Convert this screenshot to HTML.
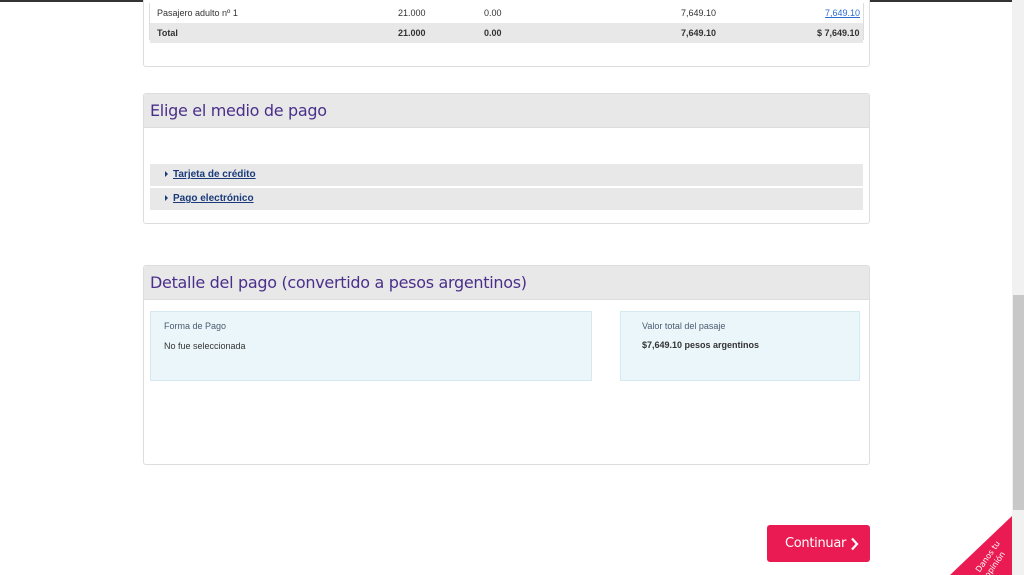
<!DOCTYPE html>
<html><head><meta charset="utf-8"><style>
*{box-sizing:border-box;margin:0;padding:0}
body{width:1024px;height:575px;overflow:hidden;background:#fff;font-family:"Liberation Sans",sans-serif;position:relative;font-size:9px;color:#333}
.a{position:absolute}
.panel{position:absolute;left:143px;width:727px;border:1px solid #ddd;border-radius:3px;background:#fff}
.ph{background:#e8e8e8;border-bottom:1px solid #ddd;height:34px;font-family:"DejaVu Sans",sans-serif;color:#4a2f8a;font-size:16px;padding:7px 6px;letter-spacing:-0.3px}
.row{position:absolute;left:6px;width:713px;height:22px;background:#e8e8e8;font-size:10px;font-weight:bold;color:#1a3a7a;padding:5px 0 0 15px}
.row span{text-decoration:underline;margin-left:5px}
.tri{display:inline-block;width:0;height:0;border-left:3px solid #1a3a7a;border-top:3px solid transparent;border-bottom:3px solid transparent}
.box{position:absolute;top:311px;height:70px;background:#ebf6fa;border:1px solid #d6e9f0}
</style></head><body>
<div class="a" style="left:0;top:0;width:1024px;height:2px;background:#333"></div>
<div class="panel" style="top:-5px;height:72px">
 <div class="a" style="left:5px;top:7px;width:715px;height:37px;border:1px solid #ddd;border-top:none"></div>
 <div class="a" style="left:6px;top:27px;width:713px;height:20px;background:#e8e8e8"></div>
 <div class="a" style="left:13px;top:12px">Pasajero adulto nº 1</div>
 <div class="a" style="left:254px;top:12px">21.000</div>
 <div class="a" style="left:340px;top:12px">0.00</div>
 <div class="a" style="left:537px;top:12px">7,649.10</div>
 <div class="a" style="left:681px;top:12px;color:#2a6fd0;text-decoration:underline">7,649.10</div>
 <div class="a" style="left:13px;top:32px;font-weight:bold">Total</div>
 <div class="a" style="left:254px;top:32px;font-weight:bold">21.000</div>
 <div class="a" style="left:340px;top:32px;font-weight:bold">0.00</div>
 <div class="a" style="left:537px;top:32px;font-weight:bold">7,649.10</div>
 <div class="a" style="left:673px;top:32px;font-weight:bold">$ 7,649.10</div>
</div>
<div class="panel" style="top:93px;height:131px">
 <div class="ph">Elige el medio de pago</div>
 <div class="row" style="top:70px"><i class="tri"></i><span>Tarjeta de crédito</span></div>
 <div class="row" style="top:94px"><i class="tri"></i><span>Pago electrónico</span></div>
</div>
<div class="panel" style="top:265px;height:200px">
 <div class="ph">Detalle del pago (convertido a pesos argentinos)</div>
</div>
<div class="box" style="left:150px;width:442px">
 <div class="a" style="left:13px;top:9px;color:#4a5a70">Forma de Pago</div>
 <div class="a" style="left:13px;top:29px">No fue seleccionada</div>
</div>
<div class="box" style="left:620px;width:240px">
 <div class="a" style="left:21px;top:9px;color:#4a5a70">Valor total del pasaje</div>
 <div class="a" style="left:21px;top:28px;font-weight:bold">$7,649.10 pesos argentinos</div>
</div>
<div class="a" style="left:767px;top:525px;width:103px;height:37px;background:#ea1a52;border-radius:3px;color:#fff;font-family:'DejaVu Sans',sans-serif;font-size:13px;padding:11px 0 0 18px;letter-spacing:-0.3px">Continuar
 <svg class="a" style="left:83px;top:12px" width="9" height="14" viewBox="0 0 9 14"><path d="M2 1.5 L7 7 L2 12.5" stroke="#fff" stroke-width="2.2" fill="none"/></svg></div>
<div class="a" style="left:1012px;top:0;width:12px;height:575px;background:#f1f1f1"></div>
<div class="a" style="left:1013px;top:295px;width:11px;height:215px;background:#c8c8c8"></div>
<svg class="a" style="left:950px;top:516px" width="62" height="59"><polygon points="62,0 62,59 0,59" fill="#ea1a52"/>
<text x="40" y="42" fill="#fff" font-size="8" font-family="DejaVu Sans" transform="rotate(-55 40 42)" text-anchor="middle">Danos tu</text>
<text x="47" y="50" fill="#fff" font-size="8" font-family="DejaVu Sans" transform="rotate(-55 47 50)" text-anchor="middle">opinión</text></svg>
</body></html>
